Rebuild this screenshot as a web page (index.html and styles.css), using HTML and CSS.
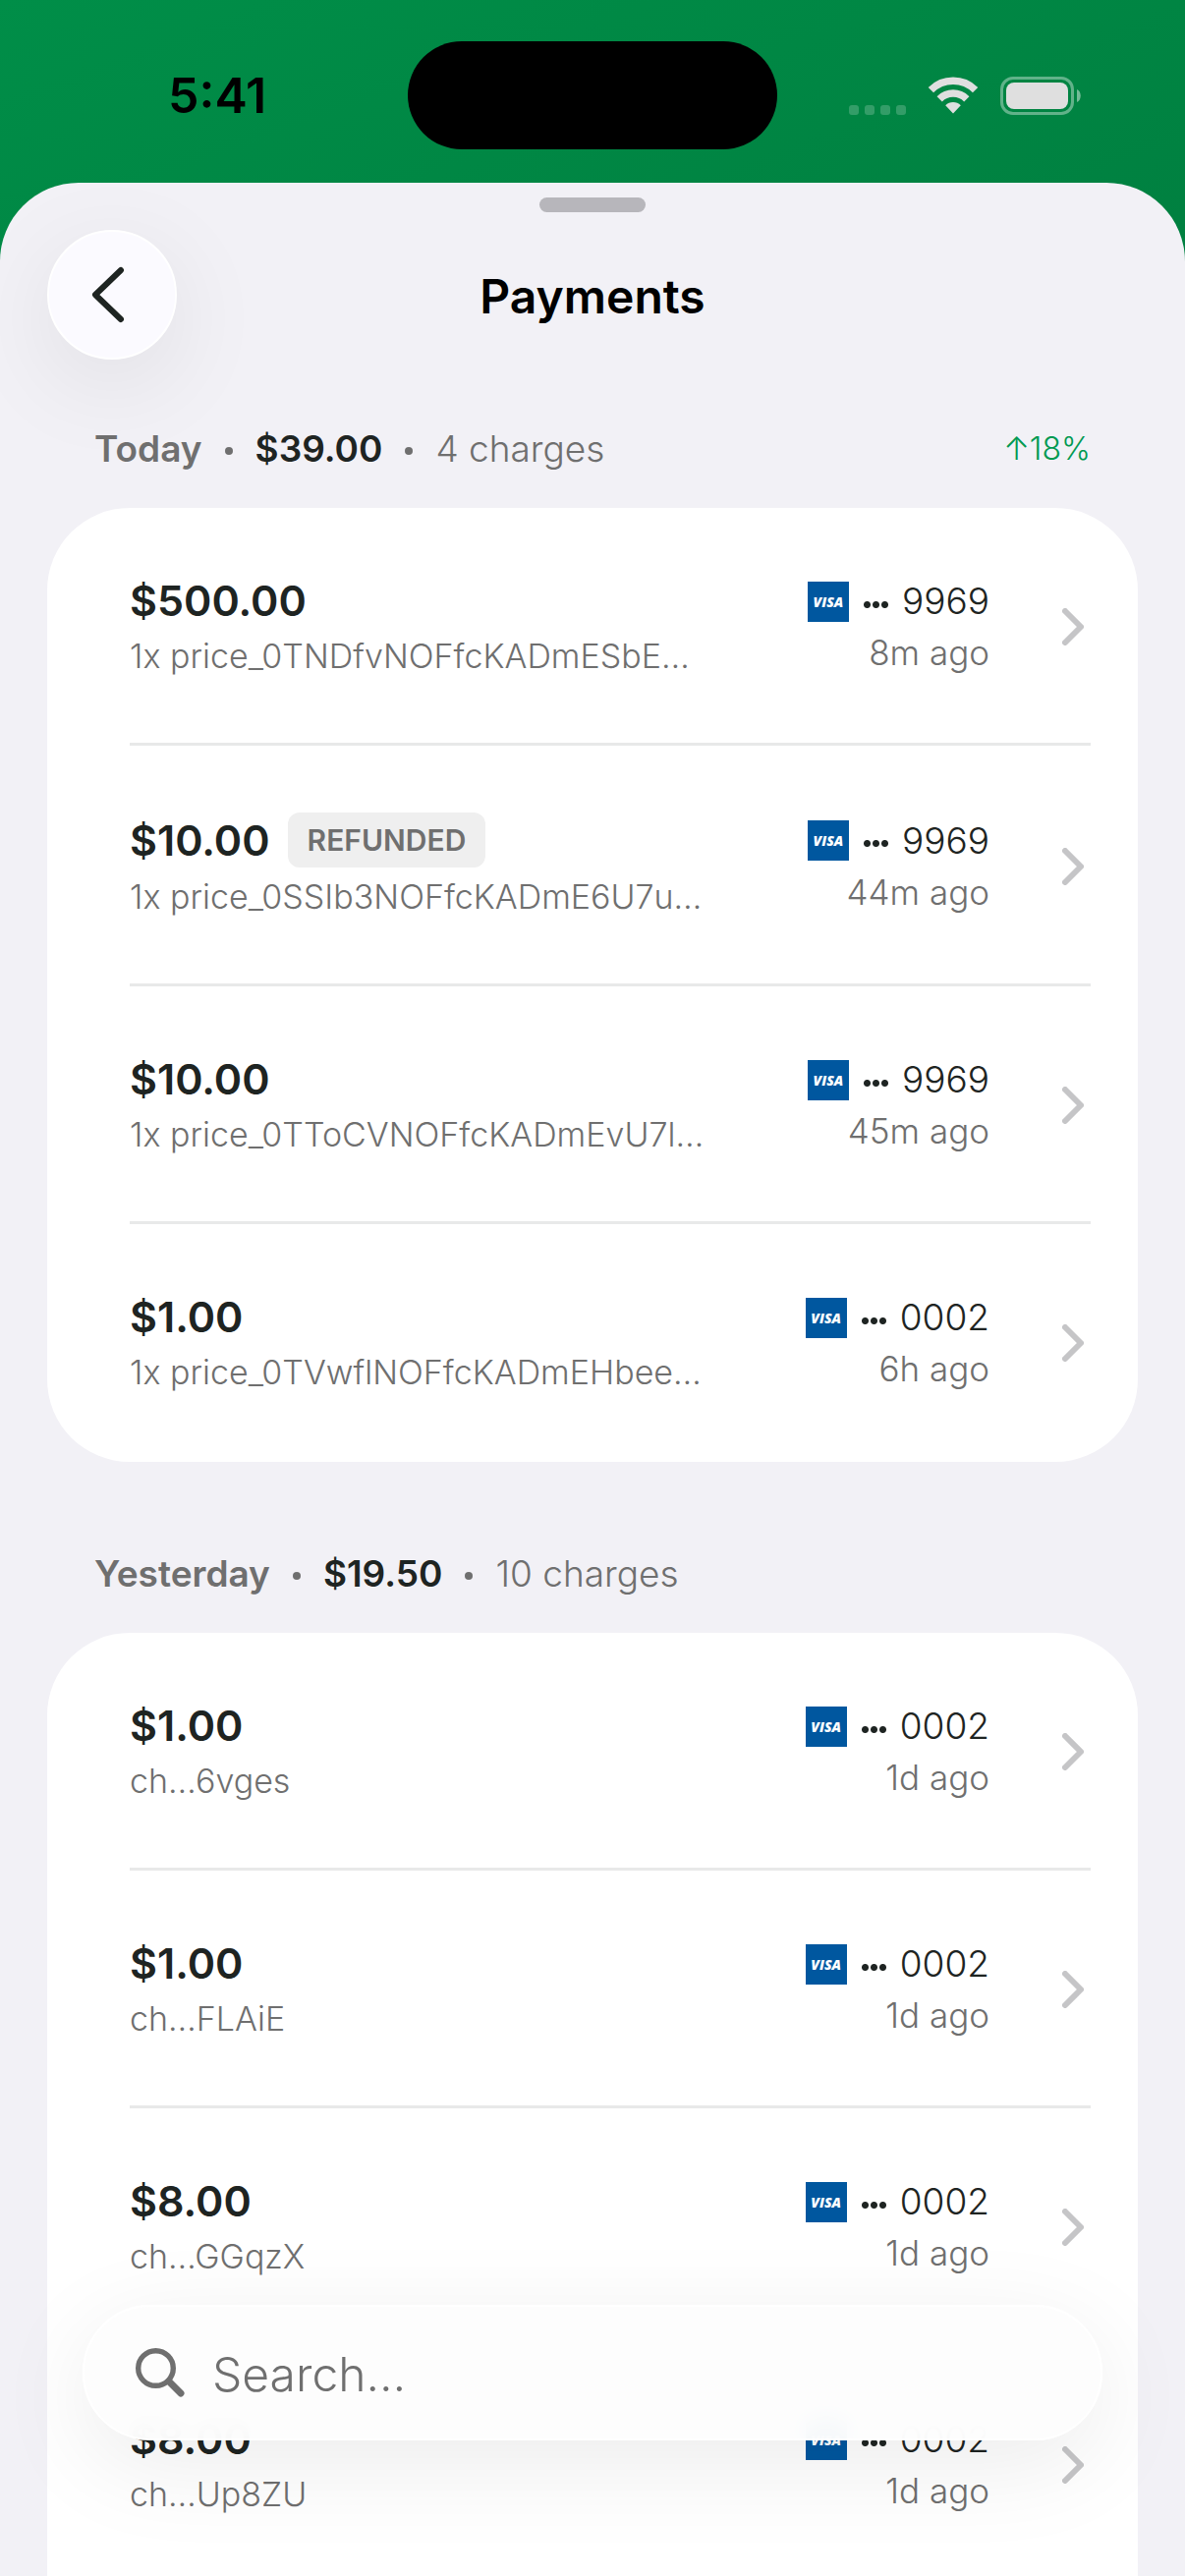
FILE: index.html
```html
<!DOCTYPE html>
<html lang="en">
<head>
    <meta charset="utf-8">
    <meta name="viewport" content="width=device-width, initial-scale=1">
    <title>Payments</title>
    <link rel="stylesheet" href="styles.css">
</head>
<body>
    <div class="status-bar">
        <div class="time">5:41</div>
        <div class="island"></div>
        <div class="status-icons">
            <svg class="signal" width="58" height="10" viewBox="0 0 58 10" fill="#fff" fill-opacity=".2">
                <rect x="0" width="10" height="10" rx="3"/>
                <rect x="16" width="10" height="10" rx="3"/>
                <rect x="32" width="10" height="10" rx="3"/>
                <rect x="48" width="10" height="10" rx="3"/>
            </svg>
            <svg width="52" height="38" viewBox="0 0 52 38" fill="none" stroke="#dfdfdf" stroke-width="7.5">
                <path d="M3.4 13.6 A32 32 0 0 1 48.6 13.6"/>
                <path d="M12.2 22.8 A19.6 19.6 0 0 1 39.8 22.8"/>
                <path d="M26 37.5 L18.2 29.2 A11 11 0 0 1 33.8 29.2 Z" fill="#dfdfdf" stroke="none"/>
            </svg>
            <svg width="82" height="39" viewBox="0 0 82 39">
                <rect x="1.5" y="1.5" width="72" height="36" rx="11.5" fill="none" stroke="#fff" stroke-opacity=".38" stroke-width="3"/>
                <rect x="6" y="6" width="63" height="27" rx="8" fill="#dfdfdf"/>
                <path d="M78 13 C83 15 83 24 78 26 Z" fill="#fff" fill-opacity=".45"/>
            </svg>
        </div>
    </div>

    <main class="sheet">
        <div class="handle"></div>
        <header class="nav">
            <button type="button" class="back" aria-label="Back">
                <svg width="34" height="58" viewBox="0 0 34 58" fill="none" stroke="#1e2422" stroke-width="6" stroke-linecap="round" stroke-linejoin="round">
                    <path d="M30 4 L4 29 L30 54"/>
                </svg>
            </button>
            <h1>Payments</h1>
        </header>

        <section>
            <h2 class="group-header">
                <span class="day">Today</span><span class="dot"></span><span class="total">$39.00</span><span class="dot"></span><span class="count">4 charges</span>
                <span class="change">↑18%</span>
            </h2>
            <ul class="card">
                <li class="row">
                    <div class="info">
                        <div class="amount">$500.00</div>
                        <div class="desc">1x price_0TNDfvNOFfcKADmESbE…</div>
                    </div>
                    <div class="meta">
                        <div class="method"><span class="visa">VISA</span><span class="mask"></span>9969</div>
                        <div class="ago">8m ago</div>
                    </div>
                    <svg class="chevron" viewBox="0 0 22 38"><path d="M3 3 L19 19 L3 35"/></svg>
                </li>
                <li class="row">
                    <div class="info">
                        <div class="amount">$10.00 <span class="badge">REFUNDED</span></div>
                        <div class="desc">1x price_0SSIb3NOFfcKADmE6U7u…</div>
                    </div>
                    <div class="meta">
                        <div class="method"><span class="visa">VISA</span><span class="mask"></span>9969</div>
                        <div class="ago">44m ago</div>
                    </div>
                    <svg class="chevron" viewBox="0 0 22 38"><path d="M3 3 L19 19 L3 35"/></svg>
                </li>
                <li class="row">
                    <div class="info">
                        <div class="amount">$10.00</div>
                        <div class="desc">1x price_0TToCVNOFfcKADmEvU7l…</div>
                    </div>
                    <div class="meta">
                        <div class="method"><span class="visa">VISA</span><span class="mask"></span>9969</div>
                        <div class="ago">45m ago</div>
                    </div>
                    <svg class="chevron" viewBox="0 0 22 38"><path d="M3 3 L19 19 L3 35"/></svg>
                </li>
                <li class="row">
                    <div class="info">
                        <div class="amount">$1.00</div>
                        <div class="desc">1x price_0TVwflNOFfcKADmEHbee…</div>
                    </div>
                    <div class="meta">
                        <div class="method"><span class="visa">VISA</span><span class="mask"></span>0002</div>
                        <div class="ago">6h ago</div>
                    </div>
                    <svg class="chevron" viewBox="0 0 22 38"><path d="M3 3 L19 19 L3 35"/></svg>
                </li>
            </ul>
        </section>

        <section>
            <h2 class="group-header">
                <span class="day">Yesterday</span><span class="dot"></span><span class="total">$19.50</span><span class="dot"></span><span class="count">10 charges</span>
            </h2>
            <ul class="card card-open">
                <li class="row">
                    <div class="info">
                        <div class="amount">$1.00</div>
                        <div class="desc">ch…6vges</div>
                    </div>
                    <div class="meta">
                        <div class="method"><span class="visa">VISA</span><span class="mask"></span>0002</div>
                        <div class="ago">1d ago</div>
                    </div>
                    <svg class="chevron" viewBox="0 0 22 38"><path d="M3 3 L19 19 L3 35"/></svg>
                </li>
                <li class="row">
                    <div class="info">
                        <div class="amount">$1.00</div>
                        <div class="desc">ch…FLAiE</div>
                    </div>
                    <div class="meta">
                        <div class="method"><span class="visa">VISA</span><span class="mask"></span>0002</div>
                        <div class="ago">1d ago</div>
                    </div>
                    <svg class="chevron" viewBox="0 0 22 38"><path d="M3 3 L19 19 L3 35"/></svg>
                </li>
                <li class="row">
                    <div class="info">
                        <div class="amount">$8.00</div>
                        <div class="desc">ch…GGqzX</div>
                    </div>
                    <div class="meta">
                        <div class="method"><span class="visa">VISA</span><span class="mask"></span>0002</div>
                        <div class="ago">1d ago</div>
                    </div>
                    <svg class="chevron" viewBox="0 0 22 38"><path d="M3 3 L19 19 L3 35"/></svg>
                </li>
                <li class="row">
                    <div class="info">
                        <div class="amount">$8.00</div>
                        <div class="desc">ch…Up8ZU</div>
                    </div>
                    <div class="meta">
                        <div class="method"><span class="visa">VISA</span><span class="mask"></span>0002</div>
                        <div class="ago">1d ago</div>
                    </div>
                    <svg class="chevron" viewBox="0 0 22 38"><path d="M3 3 L19 19 L3 35"/></svg>
                </li>
            </ul>
        </section>
    </main>

    <label class="search">
        <svg width="50" height="50" viewBox="0 0 50 50" fill="none" stroke="#6f6f6f" stroke-linecap="round">
            <circle cx="20.5" cy="20.5" r="17.8" stroke-width="5.4"/>
            <path d="M34 34 L46 46" stroke-width="7"/>
        </svg>
        <input type="text" placeholder="Search…" aria-label="Search payments">
    </label>
</body>
</html>
```
FILE: styles.css
```css
* {
    box-sizing: border-box;
}
body {
    margin: 0;
    height: 100vh;
    display: flex;
    flex-direction: column;
    overflow: hidden;
    font-family: Inter, "Liberation Sans", sans-serif;
    font-weight: 300;
    font-size: 35px;
    color: #1e2422;
    background: linear-gradient(160deg, #008e48 0, #008040 640px);
}
h1, h2, ul {
    margin: 0;
    padding: 0;
    font-weight: inherit;
}

/* status bar */
.status-bar {
    flex: none;
    display: grid;
    grid-template-columns: 1fr 376px 1fr;
    align-items: center;
    height: 186px;
    padding-top: 8px;
}
.time {
    padding-left: 171px;
    font-size: 50px;
    font-weight: 600;
    line-height: 60px;
    color: #000;
}
.island {
    height: 110px;
    border-radius: 55px;
    background: #000;
}
.status-icons {
    display: flex;
    align-items: center;
    justify-content: flex-end;
    gap: 22px;
    padding-right: 106px;
}
.signal {
    align-self: flex-end;
}

/* sheet */
.sheet {
    flex: 1;
    min-height: 0;
    padding: 15px 48px 0;
    overflow: hidden;
    border-radius: 80px 80px 0 0;
    background: #f2f1f6;
}
.handle {
    width: 108px;
    height: 15px;
    margin: 0 auto 18px;
    border-radius: 8px;
    background: #b7b6bb;
}
.nav {
    display: grid;
    grid-template-columns: 132px 1fr 132px;
    align-items: center;
}
.nav h1 {
    padding-top: 4px;
    font-size: 48px;
    font-weight: 600;
    line-height: 60px;
    text-align: center;
    color: #000;
}
.back {
    display: flex;
    align-items: center;
    justify-content: center;
    width: 132px;
    height: 132px;
    padding: 0 8px 0 0;
    border: 2px solid #fff;
    border-radius: 50%;
    background: #fbfaff;
    box-shadow: 0 24px 100px rgba(0, 0, 0, .08);
}

/* day groups */
.group-header {
    display: flex;
    align-items: center;
    height: 120px;
    margin-top: 31px;
    padding: 0 48px;
    font-size: 37px;
    line-height: 48px;
    color: #6f6f6f;
}
.day, .total {
    font-weight: 600;
}
.total {
    color: #1e2422;
}
.dot {
    width: 8px;
    height: 8px;
    margin: 4px 23px 0;
    border-radius: 50%;
    background: #6f6f6f;
}
.change {
    margin-left: auto;
    font-size: 32px;
    color: #009951;
}
section + section .group-header {
    margin-top: 54px;
}
.card {
    overflow: hidden;
    list-style: none;
    border-radius: 84px;
    background: #fff;
}
.card-open {
    border-radius: 84px 84px 0 0;
}
.row {
    display: flex;
    align-items: center;
    margin: 0 48px 0 84px;
    padding: 68px 0 65px;
    border-bottom: 3px solid #e8e9e9;
}
.row:last-child {
    border-color: transparent;
}
.info {
    flex: 1;
    min-width: 0;
}
.amount {
    display: flex;
    align-items: center;
    gap: 18px;
    min-height: 53px;
    margin-bottom: 7px;
    font-size: 43px;
    font-weight: 600;
    line-height: 53px;
}
.badge {
    padding: 0 20px;
    border-radius: 12px;
    font-size: 30px;
    line-height: 56px;
    color: #6f6f6f;
    background: #efefef;
}
.desc, .ago {
    line-height: 46px;
    color: #6f6f6f;
    white-space: nowrap;
}
.desc {
    font-size: 34px;
}
.meta {
    text-align: right;
}
.method {
    display: flex;
    align-items: center;
    justify-content: flex-end;
    margin-bottom: 6px;
    font-size: 37px;
    line-height: 46px;
}
.visa {
    width: 42px;
    height: 41px;
    font: italic 800 14px/41px "Open Sans", sans-serif;
    text-align: center;
    color: #fff;
    background: #00579f;
}
/* three round dots in front of the last digits */
.mask {
    width: 27px;
    height: 7px;
    margin: 6px 13px 0 14px;
    background: radial-gradient(circle, #1e2422 3px, transparent 4px) 0 0 / 9px 7px;
}
.chevron {
    width: 22px;
    height: 38px;
    margin: 0 7px 0 74px;
    fill: none;
    stroke: #c5c5c7;
    stroke-width: 6;
    stroke-linecap: round;
    stroke-linejoin: round;
}

/* floating search field */
.search {
    position: fixed;
    right: 84px;
    bottom: 138px;
    left: 84px;
    display: flex;
    align-items: center;
    gap: 28px;
    height: 138px;
    padding: 0 52px;
    border: 2px solid #fff;
    border-radius: 69px;
    background: rgba(253, 253, 253, .97);
    box-shadow: 0 24px 100px rgba(0, 0, 0, .08);
    backdrop-filter: blur(12px);
}
.search input {
    flex: 1;
    min-width: 0;
    padding: 4px 0 0;
    border: 0;
    outline: 0;
    font: inherit;
    font-size: 48px;
    line-height: 60px;
    color: #1e2422;
    background: none;
}
.search input::placeholder {
    color: #6f6f6f;
    opacity: 1;
}
```
